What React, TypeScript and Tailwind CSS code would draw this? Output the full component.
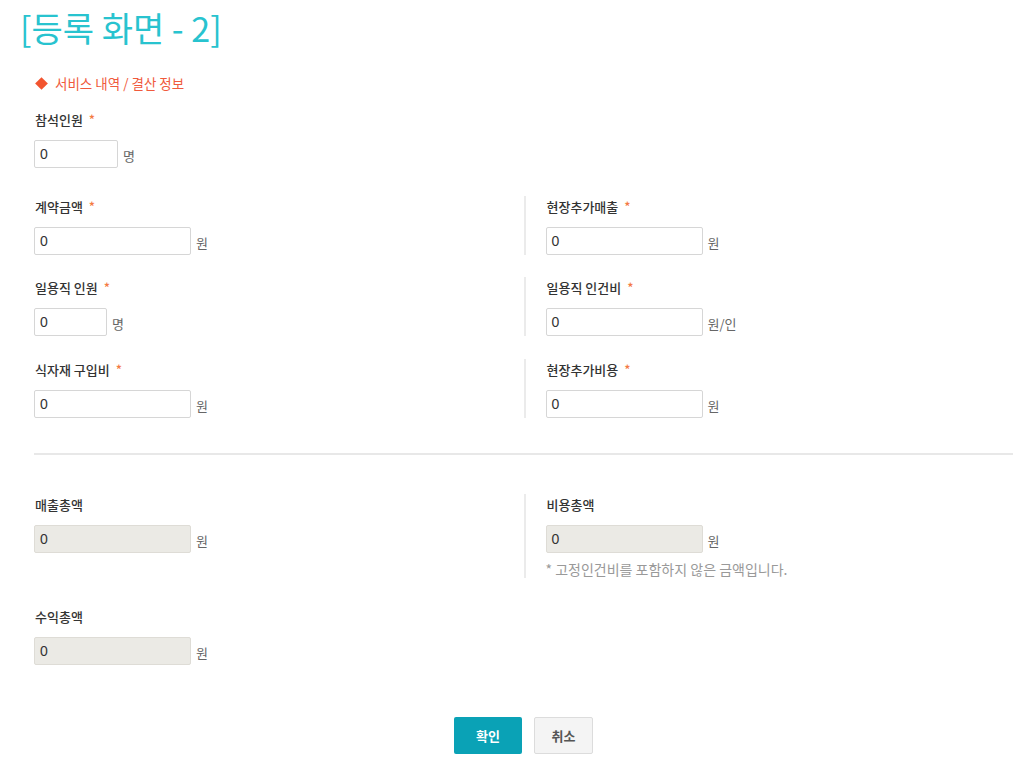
import React from "react";

const FONT = { fontFamily: '"Noto Sans CJK KR", "Noto Sans", sans-serif' };

function Field({
  label,
  required,
  width,
  unit,
  disabled,
  note,
}: {
  label: string;
  required?: boolean;
  width: string;
  unit: string;
  disabled?: boolean;
  note?: string;
}) {
  return (
    <div className="flex flex-col">
      <div className="h-[22px] text-[13px] leading-[22px] text-[#333] font-medium pl-[1px]">
        {label}
        {required && <span className="ml-[6px] text-[#f47a45]">*</span>}
      </div>
      <div className="mt-[9px] flex items-center h-[28px]">
        <div
          className={`${width} h-[28px] rounded-[2px] border flex items-center pl-[5px] text-[14px] text-[#333] ${
            disabled ? "bg-[#ebeae5] border-[#dedcd6]" : "bg-white border-[#d6d6d6]"
          }`}
          style={{ fontFamily: '"Liberation Sans", "Noto Sans CJK KR", sans-serif' }}
        >
          0
        </div>
        <span className="ml-[5px] mt-[4px] text-[13px] text-[#666]">{unit}</span>
      </div>
      {note && (
        <div className="mt-[7px] h-[18px] text-[14px] leading-[18px] text-[#999]">{note}</div>
      )}
    </div>
  );
}

function Row({ left, right, className = "" }: { left: React.ReactNode; right?: React.ReactNode; className?: string }) {
  return (
    <div className={`grid grid-cols-2 ${className}`}>
      <div>{left}</div>
      {right ? <div className="border-l-2 border-[#ebebeb] pl-[20px]">{right}</div> : <div />}
    </div>
  );
}

export default function App() {
  return (
    <div className="w-[1023px] h-[764px] bg-white overflow-hidden" style={FONT}>
      <div className="pt-[9px] pl-[20px] text-[34px] leading-[38px] text-[#28c3cf]">[등록 화면 - 2]</div>
      <div className="pl-[34px] pr-[10px]">
        <div className="mt-[26px] flex items-center h-[20px] text-[13.5px] text-[#f05a3c]">
          <span className="inline-block w-[9px] h-[9px] bg-[#f2542f] rotate-45 ml-[3px] mr-[9px]" />
          서비스 내역 / 결산 정보
        </div>
        <div className="mt-[16px]">
          <Field label="참석인원" required width="w-[84px]" unit="명" />
        </div>
        <Row
          className="mt-[28px]"
          left={<Field label="계약금액" required width="w-[157px]" unit="원" />}
          right={<Field label="현장추가매출" required width="w-[157px]" unit="원" />}
        />
        <Row
          className="mt-[22px]"
          left={<Field label="일용직 인원" required width="w-[73px]" unit="명" />}
          right={<Field label="일용직 인건비" required width="w-[157px]" unit="원/인" />}
        />
        <Row
          className="mt-[23px]"
          left={<Field label="식자재 구입비" required width="w-[157px]" unit="원" />}
          right={<Field label="현장추가비용" required width="w-[157px]" unit="원" />}
        />
        <div className="mt-[35px] h-[2px] bg-[#e8e8e8]" />
        <Row
          className="mt-[39px]"
          left={<Field label="매출총액" width="w-[157px]" unit="원" disabled />}
          right={
            <Field
              label="비용총액"
              width="w-[157px]"
              unit="원"
              disabled
              note="* 고정인건비를 포함하지 않은 금액입니다."
            />
          }
        />
        <div className="mt-[28px]">
          <Field label="수익총액" width="w-[157px]" unit="원" disabled />
        </div>
        <div className="mt-[52px] flex justify-center gap-[12px]">
          <button className="w-[68px] h-[37px] rounded-[2px] bg-[#0aa2b6] text-white text-[13px] font-bold">
            확인
          </button>
          <button className="w-[59px] h-[37px] rounded-[2px] bg-[#f4f4f4] border border-[#dcdcdc] text-[#555] text-[13px] font-bold">
            취소
          </button>
        </div>
      </div>
    </div>
  );
}
